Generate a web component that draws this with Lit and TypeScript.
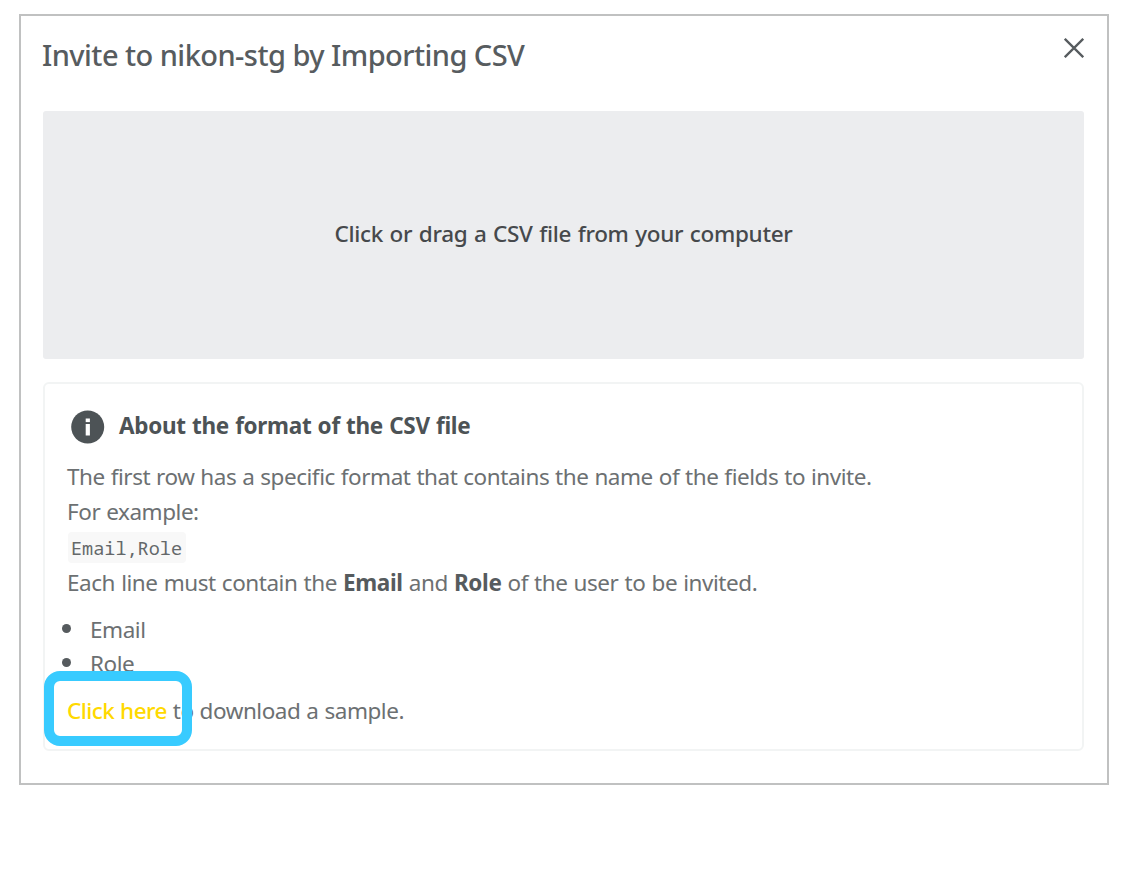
import { LitElement, html, css } from 'lit';
import { customElement, property } from 'lit/decorators.js';

@customElement('csv-dropzone')
export class CsvDropzone extends LitElement {
  @property({ type: String })
  label = '';

  static styles = css`
    :host {
      display: block;
    }

    .zone {
      display: flex;
      align-items: center;
      justify-content: center;
      box-sizing: border-box;
      height: 248px;
      padding-bottom: 3px;
      border-radius: 3px;
      background: #ecedef;
      color: #46494c;
      font-size: 22.5px;
      font-weight: 500;
      letter-spacing: -0.3px;
      word-spacing: 1px;
      cursor: pointer;
    }
  `;

  render() {
    return html`<div class="zone"><span>${this.label}</span></div>`;
  }
}

@customElement('csv-format-card')
export class CsvFormatCard extends LitElement {
  @property({ type: Array })
  fields: string[] = [];

  static styles = css`
    :host {
      display: block;
    }

    .card {
      box-sizing: border-box;
      height: 369px;
      padding: 25px 23px 0 22px;
      border: 2px solid #f2f4f4;
      border-radius: 6px;
      color: #6c7072;
      font-size: 22.5px;
      line-height: 35px;
      letter-spacing: -0.45px;
      word-spacing: 0.5px;
    }

    .heading {
      display: flex;
      align-items: center;
      gap: 14px;
      height: 36px;
      margin: 0 0 14px 4px;
      color: #4d5356;
    }

    .heading svg {
      width: 34px;
      height: 34px;
      flex: none;
    }

    .title {
      margin: 0 0 3px;
      font-size: 22.5px;
      font-weight: 700;
      letter-spacing: -0.3px;
      word-spacing: 0.7px;
    }

    p {
      margin: 0;
      white-space: nowrap;
    }

    .rule {
      word-spacing: 0.7px;
    }

    .code-line {
      display: flex;
      align-items: center;
      height: 36px;
    }

    code {
      box-sizing: border-box;
      height: 31px;
      margin: 1px 0 0 1px;
      padding: 0 4px 0 3px;
      border-radius: 4px;
      background: #f8f8f8;
      color: #64686a;
      font-family: 'Noto Sans Mono', 'DejaVu Sans Mono', monospace;
      font-size: 18.5px;
      line-height: 31px;
      letter-spacing: 0;
    }

    b {
      color: #565b5e;
      letter-spacing: -0.35px;
    }

    ul {
      margin: 12px 0;
      padding: 0;
      list-style: none;
    }

    li {
      display: flex;
      align-items: center;
      gap: 19px;
      height: 34.5px;
      margin-left: -5px;
    }

    .bullet {
      width: 9px;
      height: 9px;
      margin-bottom: 2px;
      border-radius: 50%;
      background: #565b5e;
    }

    .link {
      position: relative;
      color: #ffd900;
      font-weight: 500;
      letter-spacing: -0.55px;
      text-decoration: none;
    }

    .highlight {
      position: absolute;
      left: -23px;
      top: -24px;
      box-sizing: border-box;
      width: 148px;
      height: 75px;
      border: 10px solid #38cbff;
      border-radius: 16px;
      pointer-events: none;
    }
  `;

  render() {
    return html`
      <section class="card">
        <div class="heading">
          <svg viewBox="0 0 34 34">
            <circle cx="16.7" cy="17" r="16.5" fill="#4d5356" />
            <rect x="14.7" y="8.5" width="4.2" height="3.6" fill="#fff" />
            <rect x="14.7" y="14" width="4.2" height="11.5" fill="#fff" />
          </svg>
          <h2 class="title">About the format of the CSV file</h2>
        </div>
        <p>The first row has a specific format that contains the name of the fields to invite.</p>
        <p>For example:</p>
        <div class="code-line"><code>${this.fields.join(',')}</code></div>
        <p class="rule">Each line must contain the <b>Email</b> and <b>Role</b> of the user to be invited.</p>
        <ul>
          ${this.fields.map((field) => html`<li><span class="bullet"></span><span>${field}</span></li>`)}
        </ul>
        <p class="sample"><a class="link">Click here<span class="highlight"></span></a> to download a sample.</p>
      </section>
    `;
  }
}

@customElement('app-root')
export class AppRoot extends LitElement {
  @property({ type: String })
  workspace = 'nikon-stg';

  static styles = css`
    :host {
      display: block;
      box-sizing: border-box;
      height: 874px;
      padding: 14px 25px 0 19px;
      background: #fff;
      font-family: 'Noto Sans', 'Open Sans', sans-serif;
    }

    .dialog {
      box-sizing: border-box;
      height: 771px;
      padding: 0 23px 0 22px;
      border: 2px solid #c0c1c1;
    }

    .header {
      display: flex;
      justify-content: space-between;
      height: 95px;
      color: #575c5f;
    }

    .title {
      margin: 18px 0 0 -1px;
      font-size: 29px;
      font-weight: 500;
      line-height: 42px;
      letter-spacing: -0.55px;
      white-space: nowrap;
    }

    .close {
      width: 20px;
      height: 20px;
      margin-top: 22px;
      padding: 0;
      border: none;
      background: none;
      color: inherit;
      cursor: pointer;
    }

    .close svg {
      display: block;
    }

    csv-format-card {
      margin-top: 23px;
    }
  `;

  render() {
    return html`
      <div class="dialog">
        <div class="header">
          <h1 class="title">Invite to ${this.workspace} by Importing CSV</h1>
          <button class="close" aria-label="Close">
            <svg width="20" height="20" viewBox="0 0 20 20">
              <path d="M0.8 0.8L19.2 19.2M19.2 0.8L0.8 19.2" stroke="currentColor" stroke-width="2.3" />
            </svg>
          </button>
        </div>
        <csv-dropzone label="Click or drag a CSV file from your computer"></csv-dropzone>
        <csv-format-card .fields=${['Email', 'Role']}></csv-format-card>
      </div>
    `;
  }
}
